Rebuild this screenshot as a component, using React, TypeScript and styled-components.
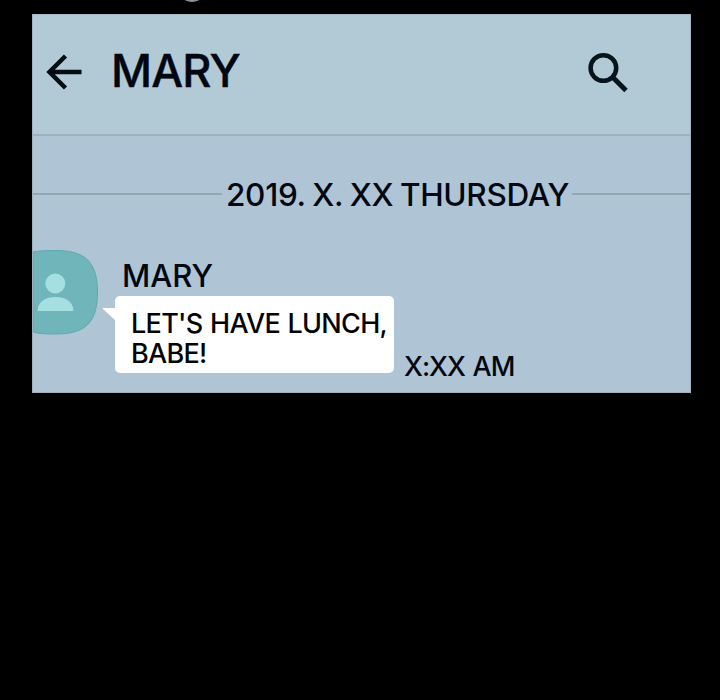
import React from 'react';
import styled, { createGlobalStyle } from 'styled-components';

const GlobalStyle = createGlobalStyle`
  * { box-sizing: border-box; }
  html, body { margin: 0; background: #000; }
`;

const Page = styled.main`
  width: 720px;
  height: 700px;
  overflow: hidden;
  background: #000;
  color: #020711;
  font-family: Inter, "Liberation Sans", sans-serif;
  font-weight: 500;
`;

const TopStrip = styled.div`
  height: 14px;
  padding-left: 182px;
  overflow: hidden;
`;

const PreviousShape = styled.svg`
  display: block;
`;

const Chat = styled.section`
  width: 659px;
  height: 379px;
  margin-left: 32px;
  overflow: hidden;
  background: #afc4d5;
  border: 1px solid #9fb2bf;
  border-top-color: #a5b8c6;
`;

const Header = styled.header`
  height: 121px;
  display: flex;
  align-items: flex-start;
  background: #b2cad6;
  border-bottom: 2px solid #9cb1bc;
`;

const BackIcon = styled.svg`
  margin: 38px 0 0 12px;
`;

const SearchIcon = styled.svg`
  margin: 36px 59px 0 auto;
`;

const Label = styled.span<{ $size: number; $line: number; $spacing?: number; $word?: number }>`
  display: block;
  white-space: pre;
  font-weight: 500;
  font-size: ${p => p.$size}px;
  line-height: ${p => p.$line}px;
  letter-spacing: ${p => p.$spacing ?? 0}px;
  word-spacing: ${p => p.$word ?? 0}px;
`;

const Title = styled(Label)`
  margin: 31px 0 0 26px;
  -webkit-text-stroke: 0.4px currentColor;
`;

const DateRow = styled.div`
  height: 40px;
  margin-top: 38px;
  display: flex;
  align-items: center;
`;

const Rule = styled.div<{ $width: number }>`
  width: ${p => p.$width}px;
  height: 2px;
  flex: none;
  background: #91a8b4;
`;

const DateText = styled(Label)`
  width: 350px;
  flex: none;
  padding: 1px 0 0 4px;
`;

const Message = styled.article`
  display: flex;
  align-items: flex-start;
  margin-top: 36px;
`;

const Avatar = styled.svg`
  flex: none;
`;

const Body = styled.div`
  margin-left: 17px;
  padding-top: 8px;
`;

const Sender = styled(Label)`
  margin-left: 7px;
`;

const BubbleRow = styled.div`
  display: flex;
  align-items: flex-end;
  margin-top: 2px;
`;

const Bubble = styled.div`
  position: relative;
  width: 279px;
  height: 77px;
  padding: 13px 0 0 16px;
  border-radius: 5px;
  background: #fff;
  color: #020303;
`;

const Tail = styled.svg`
  position: absolute;
  left: -13px;
  top: 10px;
`;

const Time = styled(Label)`
  margin: 0 0 -10px 10px;
`;

export default function App() {
  return (
    <Page>
      <GlobalStyle />
      <TopStrip>
        <PreviousShape width="20" height="4" viewBox="0 0 20 4">
          <ellipse cx="10" cy="-3" rx="9" ry="5" fill="#89949a" />
        </PreviousShape>
      </TopStrip>
      <Chat>
        <Header>
          <BackIcon width="40" height="40" viewBox="0 0 40 40" fill="none" stroke="#020b13" strokeWidth="4.5">
            <path d="M36.500 19H4M20.500 3 4.500 19l16 16" />
          </BackIcon>
          <Title as="h1" $size={45} $line={50} $spacing={-0.8}>MARY</Title>
          <SearchIcon width="44" height="44" viewBox="0 0 44 44" fill="none" stroke="#06151b" strokeWidth="4.5">
            <circle cx="16.400" cy="17" r="12.800" />
            <path d="M25.500 26 39 39.500" strokeWidth="5" />
          </SearchIcon>
        </Header>
        <DateRow>
          <Rule $width={189} />
          <DateText $size={31.5} $line={40} $spacing={-0.3} $word={-1.4}>2019. X. XX THURSDAY</DateText>
          <Rule $width={118} />
        </DateRow>
        <Message>
          <Avatar width="65" height="85" viewBox="0 0 65 85">
            <path d="M0 2C8 .5 14 .5 23 .5C52 .5 64.500 12 64.500 42C64.500 73 52 84 23 84C14 84 7 84 0 82Z" fill="#6fb5ba" stroke="#62a9ae" />
            <circle cx="22.300" cy="33.500" r="10" fill="#a6dfe1" />
            <path d="M4.500 61C5 51 13 47 22.500 47S40 51 40.500 61Z" fill="#a6dfe1" />
          </Avatar>
          <Body>
            <Sender $size={31} $line={36}>MARY</Sender>
            <BubbleRow>
              <Bubble>
                <Tail width="14" height="18" viewBox="0 0 14 18">
                  <path d="M1 2H14V15L2 4Q0 2 1 2Z" fill="#fff" />
                </Tail>
                <Label $size={27} $line={30} $spacing={-0.7} $word={1}>{"LET'S HAVE LUNCH,\nBABE!"}</Label>
              </Bubble>
              <Time $size={27} $line={32} $spacing={-1} $word={1.4}>X:XX AM</Time>
            </BubbleRow>
          </Body>
        </Message>
      </Chat>
    </Page>
  );
}
